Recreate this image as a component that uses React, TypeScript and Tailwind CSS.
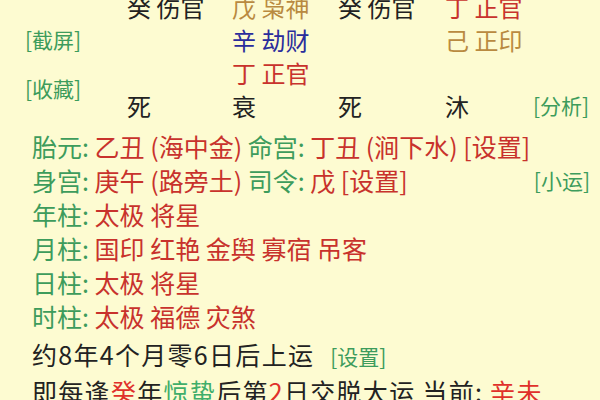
import React from "react";

const GREEN = "text-[#3d9c5c]";
const RED = "text-[#c8322c]";
const TAN = "text-[#b98a40]";
const BLUE = "text-[#2a2c9c]";
const INK = "text-[#222222]";

type Cell = { text: string; color: string } | null;

const columns: { width: string; cells: Cell[] }[] = [
  {
    width: "w-[105px]",
    cells: [{ text: "癸 伤官", color: INK }, null, null, { text: "死", color: INK }],
  },
  {
    width: "w-[106px]",
    cells: [
      { text: "戊 枭神", color: TAN },
      { text: "辛 劫财", color: BLUE },
      { text: "丁 正官", color: RED },
      { text: "衰", color: INK },
    ],
  },
  {
    width: "w-[107px]",
    cells: [{ text: "癸 伤官", color: INK }, null, null, { text: "死", color: INK }],
  },
  {
    width: "w-[88px]",
    cells: [
      { text: "丁 正官", color: RED },
      { text: "己 正印", color: TAN },
      null,
      { text: "沐", color: INK },
    ],
  },
];

function Label({ name }: { name: string }) {
  return <span className={GREEN}>{name}: </span>;
}

export default function App() {
  return (
    <div
      className="w-[600px] h-[400px] overflow-hidden bg-[#fdfbd1]"
      style={{ fontFamily: '"Noto Sans CJK SC", "Noto Sans", sans-serif' }}
    >
      {/* pillar grid */}
      <div className="flex -mt-[10px]">
        <div className="w-[127px] shrink-0 pl-[25px] flex flex-col text-[21px] leading-[24px] whitespace-nowrap">
          <span className={`${GREEN} mt-[37px]`}>[截屏]</span>
          <span className={`${GREEN} mt-[25px]`}>[收藏]</span>
        </div>
        {columns.map((col, i) => (
          <div key={i} className={`${col.width} shrink-0 flex flex-col text-[24px]`}>
            {col.cells.map((cell, j) => (
              <div key={j} className={`h-[33px] leading-[33px] whitespace-nowrap ${cell ? cell.color : ""}`}>
                {cell ? cell.text : ""}
              </div>
            ))}
          </div>
        ))}
        <div className="flex-1 flex flex-col justify-end">
          <div className={`${GREEN} text-[21px] h-[33px] leading-[33px] whitespace-nowrap`}>[分析]</div>
        </div>
      </div>

      {/* details */}
      <div className="pl-[32px] pr-[10px] mt-[7px] text-[25px] leading-[34px] whitespace-nowrap">
        <div>
          <Label name="胎元" />
          <span className={RED}>乙丑 (海中金) </span>
          <Label name="命宫" />
          <span className={RED}>丁丑 (涧下水) [设置]</span>
        </div>
        <div className="flex justify-between">
          <div>
            <Label name="身宫" />
            <span className={RED}>庚午 (路旁土) </span>
            <Label name="司令" />
            <span className={RED}>戊 [设置]</span>
          </div>
          <span className={`${GREEN} text-[21px]`}>[小运]</span>
        </div>
        <div>
          <Label name="年柱" />
          <span className={RED}>太极 将星</span>
        </div>
        <div>
          <Label name="月柱" />
          <span className={RED}>国印 红艳 金舆 寡宿 吊客</span>
        </div>
        <div>
          <Label name="日柱" />
          <span className={RED}>太极 将星</span>
        </div>
        <div>
          <Label name="时柱" />
          <span className={RED}>太极 福德 灾煞</span>
        </div>
        <div className={`${INK} mt-[4px] tracking-[1.3px]`}>
          约8年4个月零6日后上运
          <span className={`${GREEN} text-[21px] tracking-normal ml-[16px]`}>[设置]</span>
        </div>
        <div className={`${INK} mt-[1px] tracking-[1.3px]`}>
          即每逢<span className="text-[#e0302a]">癸</span>年<span className="text-[#3fae6a]">惊蛰</span>后第
          <span className="text-[#e0302a]">2</span>日交脱大运 当前: <span className="text-[#e0302a]">辛未</span>
        </div>
      </div>
    </div>
  );
}
